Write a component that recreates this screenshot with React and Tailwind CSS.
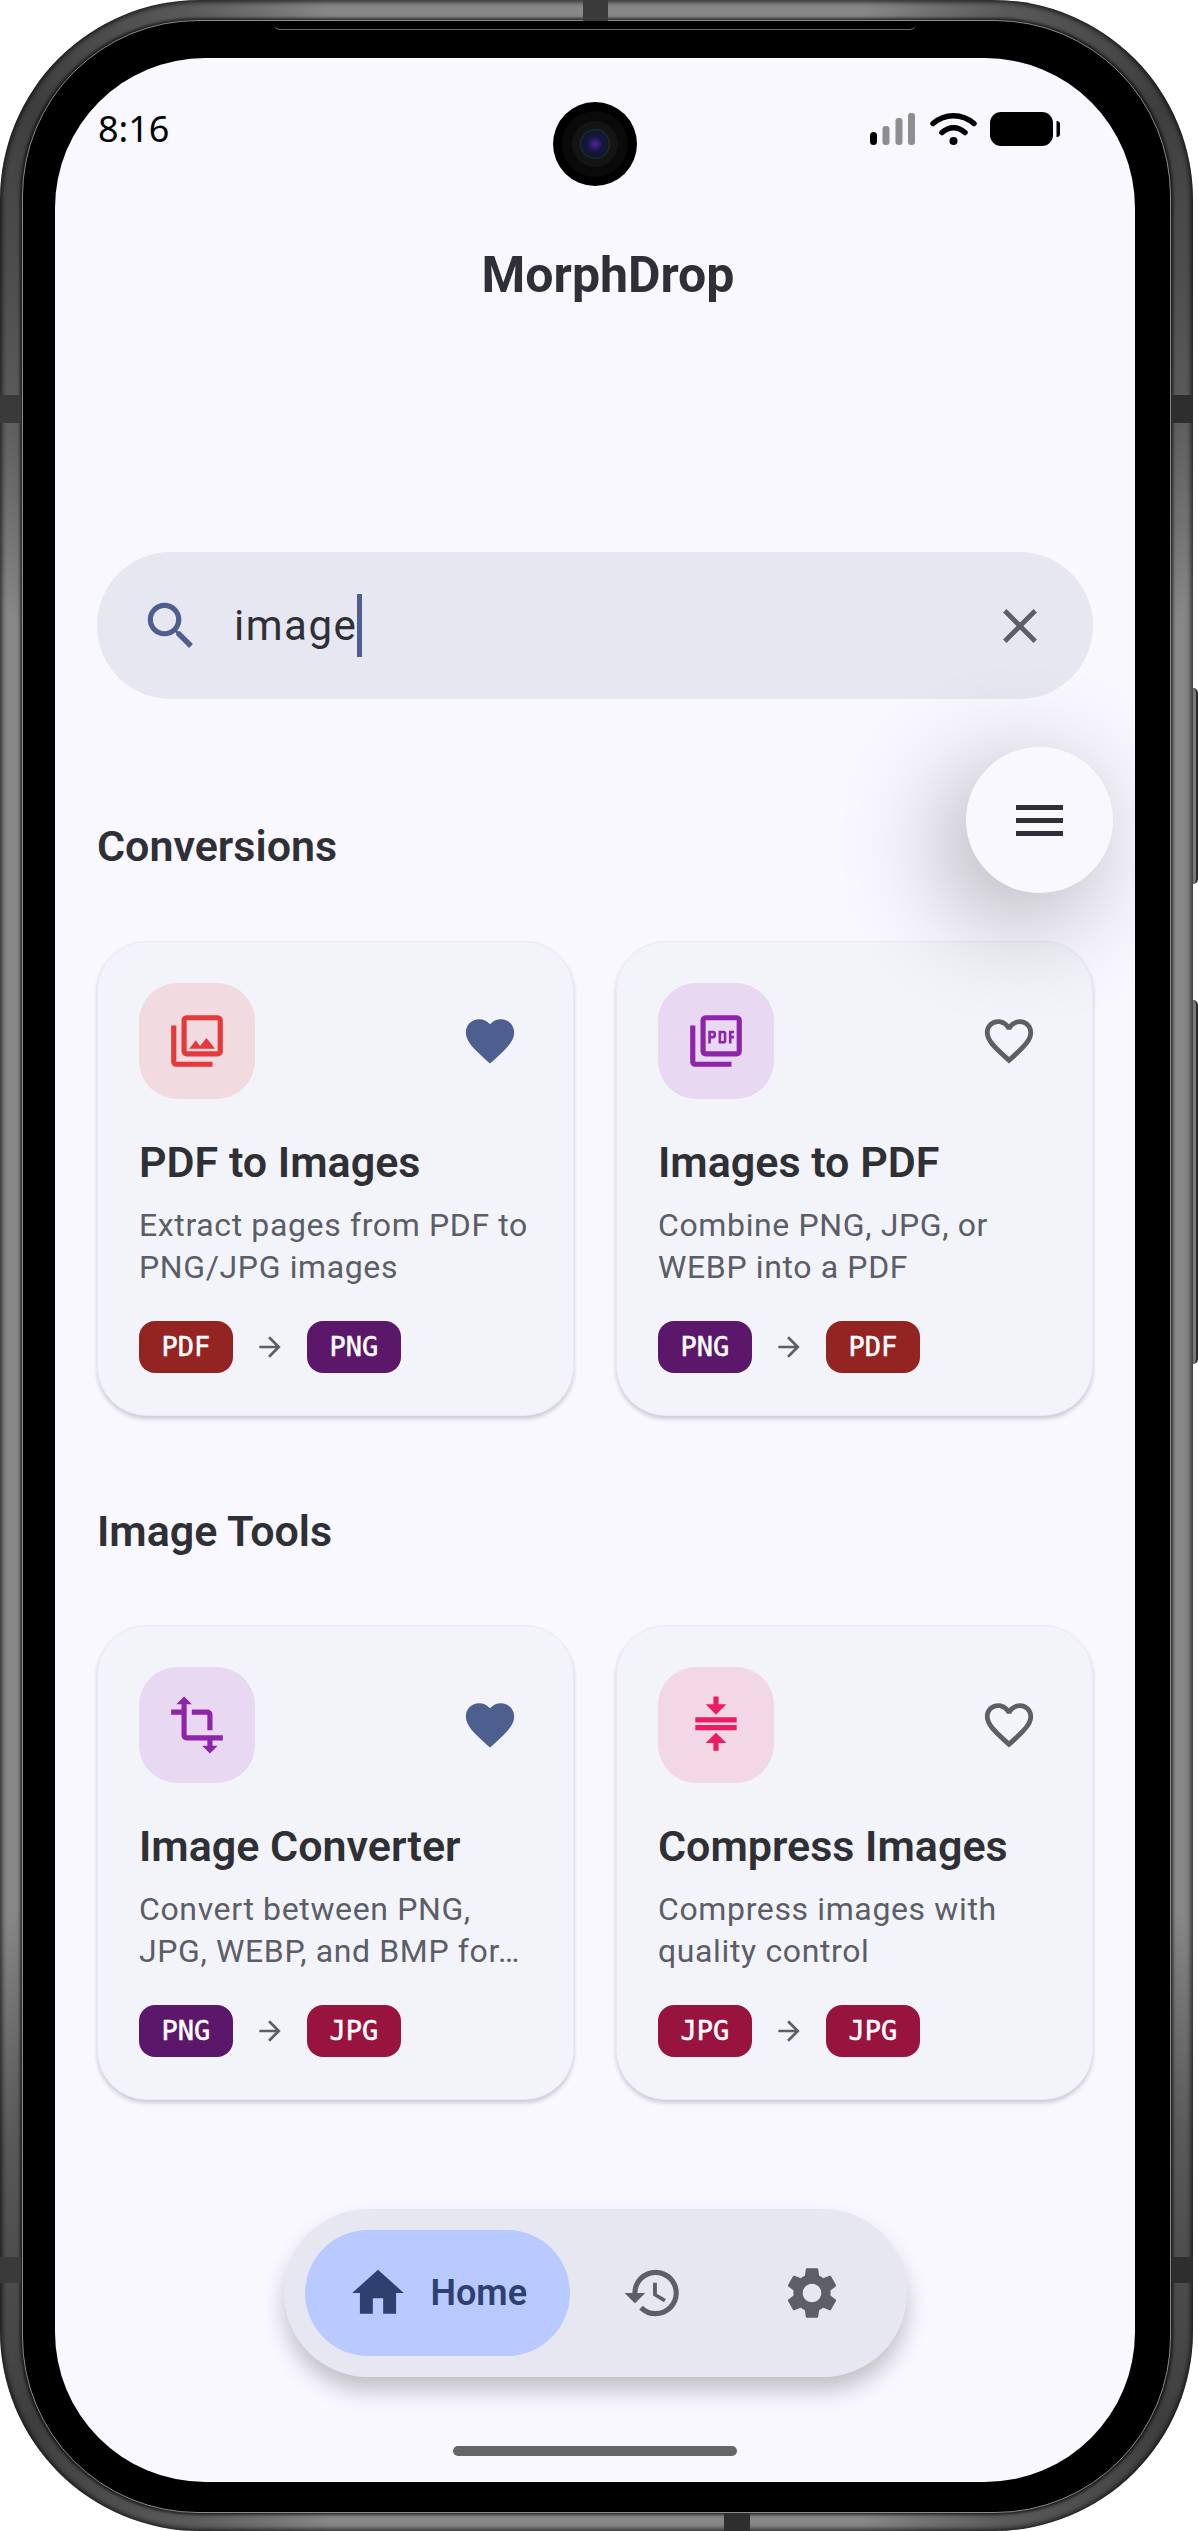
import React from "react";
import {
  MdOutlinePhotoLibrary, MdOutlinePictureAsPdf, MdTransform, MdCompress,
  MdFavorite, MdFavoriteBorder, MdHome, MdHistory, MdSettings, MdSearch, MdClose, MdArrowForward,
} from "react-icons/md";

const BADGE = { PDF: "bg-[#942422]", PNG: "bg-[#5b186b]", JPG: "bg-[#98143f]" };

function Badge({ label }) {
  return (
    <span className={`flex h-[52px] w-[94px] items-center justify-center rounded-[16px] text-[27px] font-normal text-white [-webkit-text-stroke:0.5px_white] [font-family:'DejaVu_Sans_Mono',monospace] ${BADGE[label]}`}>
      {label}
    </span>
  );
}

function Card({ icon: Icon, tile, color, title, lines, from, to, fav }) {
  return (
    <div className="h-[475px] rounded-[50px] border border-[#eceaf2] bg-[#f3f4fa] px-[41px] pt-[41px] shadow-[0_3px_4px_rgba(0,0,0,0.18)]">
      <div className="flex items-center justify-between">
        <div className={`flex h-[116px] w-[116px] items-center justify-center rounded-[38px] ${tile}`}>
          <Icon size={62} className={color} />
        </div>
        <span className="mr-[13px]">
          {fav ? <MdFavorite size={58} className="block text-[#4d5f8f]" /> : <MdFavoriteBorder size={58} className="block text-[#5d5e66]" />}
        </span>
      </div>
      <h3 className="mt-[35px] h-[56px] text-[43px] leading-[56px] font-semibold text-[#2e3036]">{title}</h3>
      <p className="mt-[14px] h-[84px] text-[32px] leading-[42px] tracking-[0.63px] text-[#5b5d68]">
        {lines[0]}<br />{lines[1]}
      </p>
      <div className="mt-[33px] flex items-center">
        <Badge label={from} />
        <MdArrowForward size={32} className="mx-[21px] text-[#5d5e66]" />
        <Badge label={to} />
      </div>
    </div>
  );
}

function StatusIcons() {
  return (
    <svg width="190" height="34" viewBox="0 0 190 34" className="block">
      <rect x="0" y="20" width="7" height="13" rx="3.5" fill="#000" />
      <rect x="12.5" y="14" width="7" height="19" rx="3" fill="#8e8e8e" />
      <rect x="25.5" y="6" width="7" height="27" rx="3" fill="#8e8e8e" />
      <rect x="38" y="1" width="7" height="32" rx="3" fill="#8e8e8e" />
      <path d="M63 11.5C75 1 92 1 104 11.5" fill="none" stroke="#000" strokeWidth="5.5" strokeLinecap="round" />
      <path d="M72 20.5C79 14 88 14 95 20.5" fill="none" stroke="#000" strokeWidth="5.5" strokeLinecap="round" />
      <circle cx="83.5" cy="29" r="4" fill="#000" />
      <rect x="120" y="0" width="63" height="34" rx="11" fill="#000" />
      <path d="M186.5 9h1a3 3 0 0 1 2.5 3v10a3 3 0 0 1-2.5 3h-1z" fill="#000" />
    </svg>
  );
}

export default function App() {
  return (
    <div className="relative h-[2531px] w-[1198px] overflow-hidden bg-white [font-family:Roboto,sans-serif]">
      {/* side buttons */}
      <div className="absolute top-[688px] left-[1186px] h-[196px] w-[12px] rounded-r-[5px] border-r-2 border-[#2a2a2a] bg-[#7a7a7a]" />
      <div className="absolute top-[1000px] left-[1186px] h-[364px] w-[12px] rounded-r-[5px] border-r-2 border-[#2a2a2a] bg-[#7a7a7a]" />

      {/* metal band */}
      <div className="relative h-[2531px] w-[1193px] rounded-[200px] bg-[conic-gradient(#878787_0deg,#878787_12deg,#5a5a5a_18deg,#3e3e3e_26deg,#5a5a5a_34deg,#878787_42deg,#878787_138deg,#5a5a5a_146deg,#3e3e3e_154deg,#5a5a5a_162deg,#878787_168deg,#878787_192deg,#5a5a5a_198deg,#3e3e3e_206deg,#5a5a5a_214deg,#878787_222deg,#878787_318deg,#5a5a5a_326deg,#3e3e3e_334deg,#5a5a5a_342deg,#878787_348deg)] pt-[20px] pr-[22px] pb-[18px] pl-[22px] shadow-[inset_0_0_5px_2px_rgba(0,0,0,0.7)]">
        {/* inner line + black bezel */}
        <div className="h-full w-full rounded-[176px] border border-[#8a8a8a] bg-black pt-[37px] pr-[31px] pb-[27px] pl-[32px] shadow-[0_0_3px_2px_rgba(0,0,0,0.65)]">
          {/* screen */}
          <div className="relative h-[2424px] w-[1080px] overflow-hidden rounded-[150px] bg-[#f9f7ff]">
            {/* status bar */}
            <div className="mt-[47px] flex h-[48px] items-center justify-between pr-[75px] pl-[43px]">
              <span className="text-[36px] leading-[48px] text-black [font-family:'Noto_Sans',sans-serif]">8:16</span>
              <StatusIcons />
            </div>

            {/* title */}
            <h1 className="mt-[92px] pl-[26px] text-center text-[50px] leading-[60px] font-bold text-[#2e3036]">MorphDrop</h1>

            {/* search */}
            <div className="mx-[42px] mt-[247px] flex h-[147px] items-center rounded-full bg-[#e6e7f0] pr-[44px] pl-[43px]">
              <MdSearch size={62} className="text-[#4d5f8f]" />
              <span className="ml-[32px] text-[42px] leading-[56px] tracking-[1.5px] text-[#2f3036]">image</span>
              <span className="h-[63px] w-[5px] bg-[#4d5f8f]" />
              <MdClose size={58} className="ml-auto text-[#5d5e66]" />
            </div>

            <section className="mt-[122px]">
              <h2 className="px-[42px] text-[43px] leading-[50px] font-semibold text-[#2e3036]">Conversions</h2>
              <div className="mt-[70px] grid grid-cols-2 gap-x-[42px] px-[42px]">
                <Card icon={MdOutlinePhotoLibrary} tile="bg-[#f2dbe0]" color="text-[#e5393a]" title="PDF to Images" lines={["Extract pages from PDF to", "PNG/JPG images"]} from="PDF" to="PNG" fav />
                <Card icon={MdOutlinePictureAsPdf} tile="bg-[#e8d8f1]" color="text-[#8e24aa]" title="Images to PDF" lines={["Combine PNG, JPG, or", "WEBP into a PDF"]} from="PNG" to="PDF" />
              </div>
            </section>

            <section className="mt-[90px]">
              <h2 className="px-[42px] text-[43px] leading-[50px] font-semibold text-[#2e3036]">Image Tools</h2>
              <div className="mt-[69px] grid grid-cols-2 gap-x-[42px] px-[42px]">
                <Card icon={MdTransform} tile="bg-[#e8d8f1]" color="text-[#8e24aa]" title="Image Converter" lines={["Convert between PNG,", "JPG, WEBP, and BMP for…"]} from="PNG" to="JPG" fav />
                <Card icon={MdCompress} tile="bg-[#f2d8e5]" color="text-[#ec1b63]" title="Compress Images" lines={["Compress images with", "quality control"]} from="JPG" to="JPG" />
              </div>
            </section>

            {/* bottom nav */}
            <div className="mt-[109px] flex justify-center">
              <nav className="flex h-[168px] w-[623px] items-center rounded-full bg-[#e6e7f0] pl-[21px] shadow-[0_14px_22px_rgba(0,0,0,0.22)]">
                <div className="flex h-[126px] w-[265px] items-center rounded-full bg-[#b8caff] pl-[42px] text-[#2d4070]">
                  <MdHome size={62} />
                  <span className="ml-[22px] text-[36px] font-semibold">Home</span>
                </div>
                <MdHistory size={62} className="ml-[52px] text-[#5d5e66]" />
                <MdSettings size={62} className="ml-[97px] text-[#5d5e66]" />
              </nav>
            </div>

            {/* home indicator */}
            <div className="mx-auto mt-[69px] h-[10px] w-[284px] rounded-full bg-[#666666]" />

            {/* camera */}
            <div className="absolute top-[44px] left-[498px] flex h-[84px] w-[84px] items-center justify-center rounded-full bg-black">
              <div className="flex h-[66px] w-[66px] items-center justify-center rounded-full bg-[#0a0a0a]">
                <div className="flex h-[46px] w-[46px] items-center justify-center rounded-full bg-[#141414]">
                  <div className="h-[30px] w-[30px] rounded-full bg-[radial-gradient(circle,#4a2aa0_0%,#1a1440_35%,#0c1a2a_62%,#5a5a5e_88%,#2a2a2a_100%)]" />
                </div>
              </div>
            </div>

            {/* floating menu button */}
            <div className="absolute top-[689px] left-[911px] flex h-[146px] w-[147px] flex-col items-center justify-center gap-[8px] rounded-full bg-[#f9f7ff] shadow-[-20px_24px_110px_rgba(0,0,0,0.32)]">
              <span className="h-[5px] w-[47px] bg-[#2e3036]" />
              <span className="h-[5px] w-[47px] bg-[#2e3036]" />
              <span className="h-[5px] w-[47px] bg-[#2e3036]" />
            </div>
          </div>
        </div>

        {/* earpiece step in the inner edge */}
        <div className="absolute top-[22px] left-[274px] h-[8px] w-[642px] rounded-b-[6px] border-b border-[#6a6a6a] bg-black" />

        {/* antenna bands */}
        <div className="absolute top-0 left-[583px] h-[21px] w-[25px] bg-[#3a3a3a]" />
        <div className="absolute top-[2513px] left-[724px] h-[18px] w-[26px] bg-[#2e2e2e]" />
        <div className="absolute top-[395px] left-0 h-[28px] w-[21px] bg-[#3a3a3a]" />
        <div className="absolute top-[2257px] left-0 h-[26px] w-[21px] bg-[#3a3a3a]" />
        <div className="absolute top-[395px] left-[1172px] h-[28px] w-[21px] bg-[#2e2e2e]" />
        <div className="absolute top-[2257px] left-[1172px] h-[26px] w-[21px] bg-[#2e2e2e]" />
      </div>
    </div>
  );
}
